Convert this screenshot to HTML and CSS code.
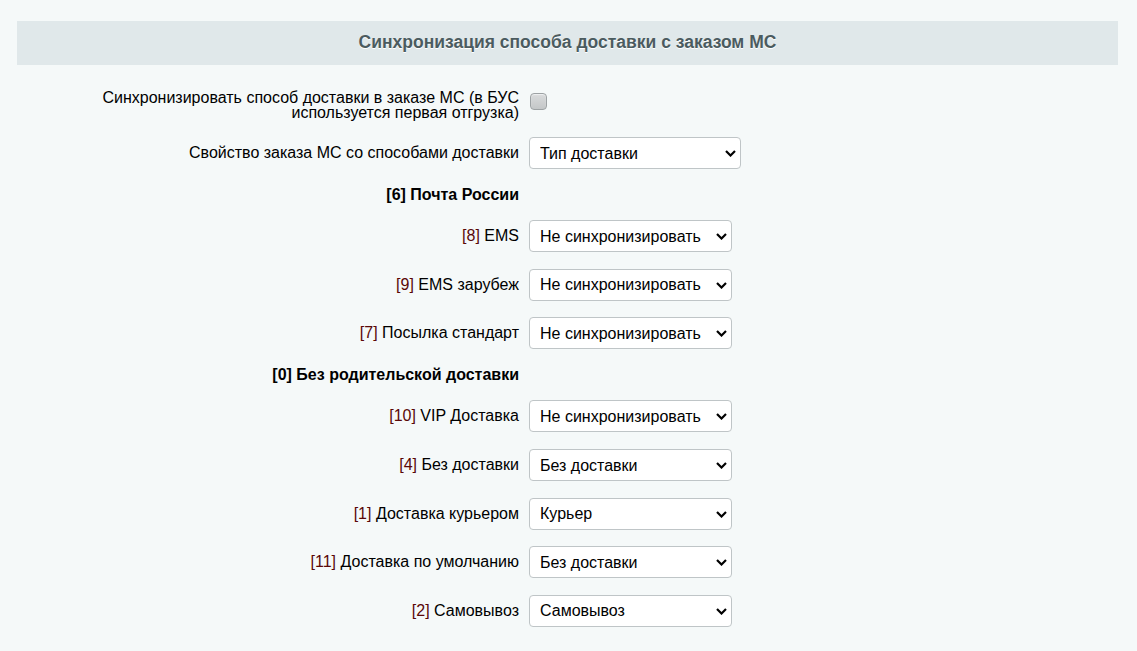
FILE: index.html
```html
<!DOCTYPE html>
<html lang="ru">

<head>
    <meta charset="UTF-8">
    <meta name="viewport" content="width=device-width, initial-scale=1.0">
    <title>Синхронизация способа доставки</title>

    <link rel="stylesheet" href="styles.css">
</head>

<body>

    <main class="settings">
        <div class="settings--heading">Синхронизация способа доставки с заказом МС</div>

        <div class="settings--rows">
            <div class="row row--check">
                <label class="row--label" for="sync">Синхронизировать способ доставки в заказе МС (в БУС используется первая отгрузка)</label>
                <div class="row--field">
                    <input type="checkbox" id="sync" class="check">
                </div>
            </div>

            <div class="row">
                <label class="row--label" for="prop">Свойство заказа МС со способами доставки</label>
                <div class="row--field">
                    <span class="select-wrap select-wrap--wide">
                        <select id="prop" class="select">
                            <option>Тип доставки</option>
                        </select>
                        <svg class="select-arrow" width="11" height="7" viewBox="0 0 11 7"><path d="M1 1l4.5 4.5L10 1" fill="none" stroke="#000" stroke-width="2.2"/></svg>
                    </span>
                </div>
            </div>

            <div class="row row--group">
                <div class="row--label">[6] Почта России</div>
                <div class="row--field"></div>
            </div>

            <div class="row">
                <label class="row--label"><span class="id">[8]</span> EMS</label>
                <div class="row--field">
                    <span class="select-wrap">
                        <select class="select"><option>Не синхронизировать</option></select>
                        <svg class="select-arrow" width="11" height="7" viewBox="0 0 11 7"><path d="M1 1l4.5 4.5L10 1" fill="none" stroke="#000" stroke-width="2.2"/></svg>
                    </span>
                </div>
            </div>

            <div class="row">
                <label class="row--label"><span class="id">[9]</span> EMS зарубеж</label>
                <div class="row--field">
                    <span class="select-wrap">
                        <select class="select"><option>Не синхронизировать</option></select>
                        <svg class="select-arrow" width="11" height="7" viewBox="0 0 11 7"><path d="M1 1l4.5 4.5L10 1" fill="none" stroke="#000" stroke-width="2.2"/></svg>
                    </span>
                </div>
            </div>

            <div class="row">
                <label class="row--label"><span class="id">[7]</span> Посылка стандарт</label>
                <div class="row--field">
                    <span class="select-wrap">
                        <select class="select"><option>Не синхронизировать</option></select>
                        <svg class="select-arrow" width="11" height="7" viewBox="0 0 11 7"><path d="M1 1l4.5 4.5L10 1" fill="none" stroke="#000" stroke-width="2.2"/></svg>
                    </span>
                </div>
            </div>

            <div class="row row--group">
                <div class="row--label">[0] Без родительской доставки</div>
                <div class="row--field"></div>
            </div>

            <div class="row">
                <label class="row--label"><span class="id">[10]</span> VIP Доставка</label>
                <div class="row--field">
                    <span class="select-wrap">
                        <select class="select"><option>Не синхронизировать</option></select>
                        <svg class="select-arrow" width="11" height="7" viewBox="0 0 11 7"><path d="M1 1l4.5 4.5L10 1" fill="none" stroke="#000" stroke-width="2.2"/></svg>
                    </span>
                </div>
            </div>

            <div class="row">
                <label class="row--label"><span class="id">[4]</span> Без доставки</label>
                <div class="row--field">
                    <span class="select-wrap">
                        <select class="select"><option>Без доставки</option></select>
                        <svg class="select-arrow" width="11" height="7" viewBox="0 0 11 7"><path d="M1 1l4.5 4.5L10 1" fill="none" stroke="#000" stroke-width="2.2"/></svg>
                    </span>
                </div>
            </div>

            <div class="row">
                <label class="row--label"><span class="id">[1]</span> Доставка курьером</label>
                <div class="row--field">
                    <span class="select-wrap">
                        <select class="select"><option>Курьер</option></select>
                        <svg class="select-arrow" width="11" height="7" viewBox="0 0 11 7"><path d="M1 1l4.5 4.5L10 1" fill="none" stroke="#000" stroke-width="2.2"/></svg>
                    </span>
                </div>
            </div>

            <div class="row">
                <label class="row--label"><span class="id">[11]</span> Доставка по умолчанию</label>
                <div class="row--field">
                    <span class="select-wrap">
                        <select class="select"><option>Без доставки</option></select>
                        <svg class="select-arrow" width="11" height="7" viewBox="0 0 11 7"><path d="M1 1l4.5 4.5L10 1" fill="none" stroke="#000" stroke-width="2.2"/></svg>
                    </span>
                </div>
            </div>

            <div class="row">
                <label class="row--label"><span class="id">[2]</span> Самовывоз</label>
                <div class="row--field">
                    <span class="select-wrap">
                        <select class="select"><option>Самовывоз</option></select>
                        <svg class="select-arrow" width="11" height="7" viewBox="0 0 11 7"><path d="M1 1l4.5 4.5L10 1" fill="none" stroke="#000" stroke-width="2.2"/></svg>
                    </span>
                </div>
            </div>
        </div>
    </main>

</body>

</html>
```

FILE: styles.css
```css
/* Variables */
:root {
    --color-page: #f5f9f9;
    --color-heading-bg: #e0e8ea;
    --color-heading-text: #4b5b5f;
    --color-text: #000000;
    --color-id: #5a0808;
    --color-border: #bfc5c7;
}

/* Base */
html,
body {
    margin: 0;
    padding: 0;
    background-color: var(--color-page);
}

body {
    font-family: "Liberation Sans", Arial, sans-serif;
    font-size: 16px;
    color: var(--color-text);
}

/* Settings */
.settings {
    margin: 21px 19px 0 17px;
}

.settings--heading {
    height: 44px;
    line-height: 42px;
    background-color: var(--color-heading-bg);
    color: var(--color-heading-text);
    font-size: 17.5px;
    font-weight: bold;
    text-align: center;
    text-shadow: 0 1px #ffffff;
}

.settings--rows {
    padding-top: 17px;
}

.row {
    display: grid;
    grid-template-columns: 512px 1fr;
    align-items: center;
    height: 48.6px;
    box-sizing: border-box;
}

.row--label {
    padding-right: 10px;
    text-align: right;
    line-height: 16px;
}

.row--check {
    height: 47px;
    padding-top: 8px;
    align-items: start;
}

.row--check .row--label {
    justify-self: end;
    max-width: 430px;
    line-height: 15px;
}

.row--group {
    height: 34.4px;
}

.row--group .row--label {
    font-weight: bold;
}

.id {
    color: var(--color-id);
}

/* Controls */
.check {
    -webkit-appearance: none;
    appearance: none;
    display: block;
    width: 17px;
    height: 17px;
    margin: 3px 0 0 1px;
    border: 1px solid #9da2a4;
    border-radius: 4px;
    background: linear-gradient(#d9dbdc, #c4c7c8);
    box-shadow: inset 0 1px 1px #eef0f1;
}

.select-wrap {
    position: relative;
    display: block;
    width: 203px;
}

.select-wrap--wide {
    width: 212px;
}

.select {
    -webkit-appearance: none;
    appearance: none;
    display: block;
    width: 100%;
    height: 32px;
    margin: 0;
    padding: 0 24px 0 10px;
    border: 1px solid var(--color-border);
    border-radius: 4px;
    background-color: #ffffff;
    font-family: "Liberation Sans", Arial, sans-serif;
    font-size: 16px;
    color: #000000;
}

.select-arrow {
    position: absolute;
    top: 13px;
    right: 5px;
    pointer-events: none;
}
```
